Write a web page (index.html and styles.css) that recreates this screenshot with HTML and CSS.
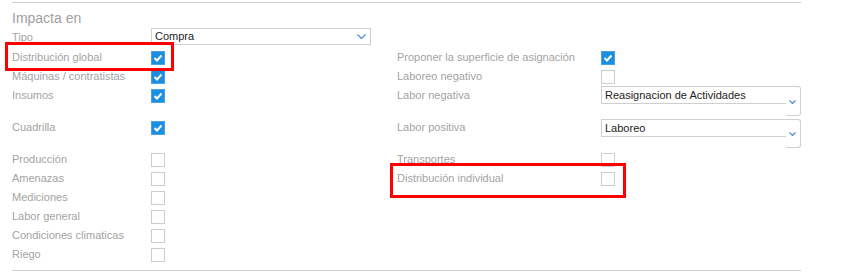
FILE: index.html
```html
<!DOCTYPE html>
<html lang="es">
	<head>
		<meta charset="UTF-8" />
		<title>Impacta en</title>
		<link rel="stylesheet" href="styles.css">
	</head>
	<body>
		<div class="panel">
			<hr class="rule" />
			<h2 class="title">Impacta en</h2>

			<div class="form-grid">
				<!-- Tipo -->
				<div class="lbl lbl-tipo">Tipo</div>
				<div class="ctl-tipo">
					<div class="select-tipo">
						<span>Compra</span>
						<svg class="chev" width="9" height="5" viewBox="0 0 9 5"><polyline points="0.5,0.5 4.5,4.5 8.5,0.5" /></svg>
					</div>
				</div>
				<div></div>
				<div></div>

				<div class="lbl">Distribución global</div>
				<div class="ctl"><span class="cb checked"><svg width="12" height="12" viewBox="0 0 12 12"><polyline points="2.5,6 5,8.5 9.5,3.5" /></svg></span></div>
				<div class="lbl">Proponer la superficie de asignación</div>
				<div class="ctl"><span class="cb checked"><svg width="12" height="12" viewBox="0 0 12 12"><polyline points="2.5,6 5,8.5 9.5,3.5" /></svg></span></div>

				<div class="lbl">Máquinas / contratistas</div>
				<div class="ctl"><span class="cb checked"><svg width="12" height="12" viewBox="0 0 12 12"><polyline points="2.5,6 5,8.5 9.5,3.5" /></svg></span></div>
				<div class="lbl">Laboreo negativo</div>
				<div class="ctl"><span class="cb"></span></div>

				<div class="lbl">Insumos</div>
				<div class="ctl"><span class="cb checked"><svg width="12" height="12" viewBox="0 0 12 12"><polyline points="2.5,6 5,8.5 9.5,3.5" /></svg></span></div>
				<div class="lbl">Labor negativa</div>
				<div class="ctl-select">
					<div class="combo combo-tall">
						<div class="combo-field">Reasignacion de Actividades</div>
						<div class="combo-btn">
							<svg width="7" height="4" viewBox="0 0 7 4"><polyline points="0.5,0.5 3.5,3.5 6.5,0.5" /></svg>
						</div>
					</div>
				</div>

				<div class="lbl">Cuadrilla</div>
				<div class="ctl"><span class="cb checked"><svg width="12" height="12" viewBox="0 0 12 12"><polyline points="2.5,6 5,8.5 9.5,3.5" /></svg></span></div>
				<div class="lbl">Labor positiva</div>
				<div class="ctl-select second">
					<div class="combo">
						<div class="combo-field">Laboreo</div>
						<div class="combo-btn">
							<svg width="7" height="4" viewBox="0 0 7 4"><polyline points="0.5,0.5 3.5,3.5 6.5,0.5" /></svg>
						</div>
					</div>
				</div>

				<div class="lbl">Producción</div>
				<div class="ctl"><span class="cb"></span></div>
				<div class="lbl">Transportes</div>
				<div class="ctl"><span class="cb"></span></div>

				<div class="lbl">Amenazas</div>
				<div class="ctl"><span class="cb"></span></div>
				<div class="lbl">Distribución individual</div>
				<div class="ctl"><span class="cb"></span></div>

				<div class="lbl">Mediciones</div>
				<div class="ctl"><span class="cb"></span></div>
				<div></div>
				<div></div>

				<div class="lbl">Labor general</div>
				<div class="ctl"><span class="cb"></span></div>
				<div></div>
				<div></div>

				<div class="lbl">Condiciones climaticas</div>
				<div class="ctl"><span class="cb"></span></div>
				<div></div>
				<div></div>

				<div class="lbl">Riego</div>
				<div class="ctl"><span class="cb"></span></div>
				<div></div>
				<div></div>
			</div>

			<hr class="rule bottom" />
		</div>

		<!-- anotaciones -->
		<div class="mark mark-global"></div>
		<div class="mark mark-individual"></div>
	</body>
</html>
```

FILE: styles.css
```css
body {
	margin: 0;
	background: #fff;
	font-family: "Liberation Sans", Arial, sans-serif;
	font-size: 11px;
	color: #a3a3a3;
}
.panel {
	width: 789px;
	padding: 2px 0 0 12px;
}
.rule {
	margin: 0;
	border: none;
	border-top: 1px solid #cfcfcf;
}
.rule.bottom {
	margin-top: 5px;
}
.title {
	margin: 7px 0 2px;
	font-size: 14px;
	font-weight: normal;
	line-height: 16px;
	color: #a0a0a0;
}

.form-grid {
	display: grid;
	grid-template-columns: 139px 246px 204px 200px;
	align-items: start;
}
.lbl {
	padding-top: 2px;
	line-height: 13px;
	white-space: nowrap;
}
.lbl-tipo {
	padding-top: 3px;
}
.ctl {
	padding: 2px 0 3px;
	height: 14px;
}

/* checkbox */
.cb {
	display: block;
	box-sizing: border-box;
	width: 14px;
	height: 14px;
	border: 1px solid #cdcdcd;
	background: #fff;
}
.cb.checked {
	background: #1b8fdf;
	border-color: #4aa2e4;
}
.cb svg {
	display: block;
	margin: 0;
}
.cb polyline {
	fill: none;
	stroke: #fff;
	stroke-width: 2;
}

/* tipo */
.ctl-tipo {
	padding-bottom: 4px;
}
.select-tipo {
	box-sizing: border-box;
	display: flex;
	justify-content: space-between;
	align-items: center;
	width: 220px;
	height: 17px;
	padding: 0 4px 0 3px;
	border: 1px solid #cfcfcf;
	color: #1d1d1d;
	line-height: 15px;
}
.chev polyline,
.combo-btn polyline {
	fill: none;
	stroke: #4f8ad9;
	stroke-width: 1.2;
}

/* combos de la derecha */
.ctl-select {
	margin-top: -1px;
	padding-bottom: 3px;
}
.ctl-select.second {
	margin-top: 0;
	padding-bottom: 3px;
}
.combo {
	display: flex;
	align-items: flex-start;
	width: 200px;
}
.combo-field {
	box-sizing: border-box;
	flex: 1;
	height: 18px;
	padding-left: 3px;
	border: 1px solid #cfcfcf;
	border-right: none;
	color: #1d1d1d;
	line-height: 16px;
}
.combo-btn {
	box-sizing: border-box;
	width: 15px;
	height: 29px;
	padding: 12px 0 0 3px;
	border: 1px solid #cfcfcf;
	border-left: none;
	border-radius: 0 3px 3px 0;
}
.combo-tall .combo-btn {
	height: 30px;
	padding-top: 13px;
}
.combo-btn svg {
	display: block;
}

/* marcas rojas */
.mark {
	position: absolute;
	box-sizing: border-box;
	border: 3px solid #f00;
}
.mark-global {
	left: 5px;
	top: 42px;
	width: 169px;
	height: 29px;
}
.mark-individual {
	left: 390px;
	top: 163px;
	width: 236px;
	height: 35px;
}
```
